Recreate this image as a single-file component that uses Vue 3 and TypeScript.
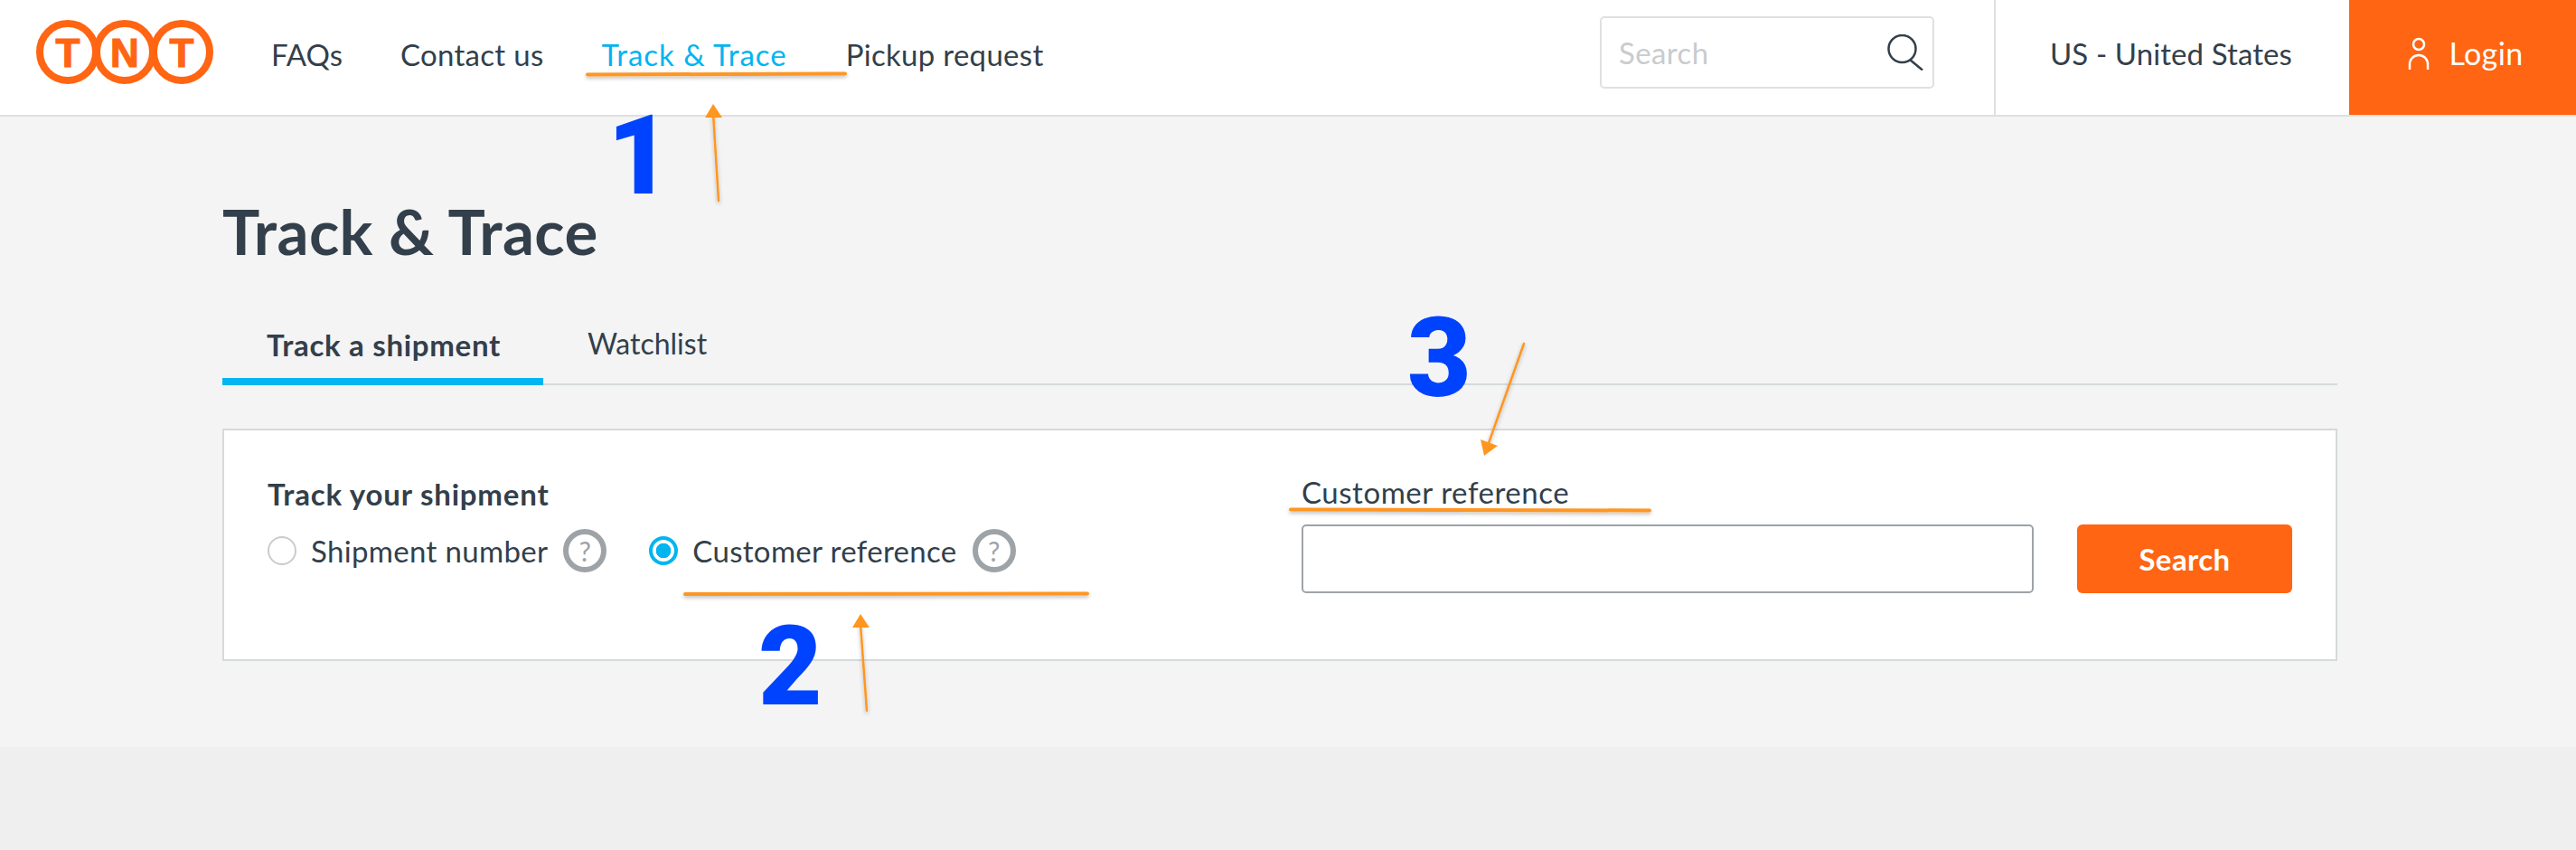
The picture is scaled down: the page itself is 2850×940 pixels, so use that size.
<script setup lang="ts">
const navItems: { label: string; active?: boolean }[] = [
  { label: 'FAQs' },
  { label: 'Contact us' },
  { label: 'Track & Trace', active: true },
  { label: 'Pickup request' },
]
</script>

<template>
  <div class="page">
    <header class="topbar">
      <svg class="logo" viewBox="0 0 196 71" width="196" height="71" aria-label="TNT">
        <g fill="none" stroke="#ff6512" stroke-width="8">
          <ellipse cx="35" cy="35.5" rx="31" ry="31.5" />
          <ellipse cx="98" cy="35.5" rx="31" ry="31.5" />
          <ellipse cx="161" cy="35.5" rx="31" ry="31.5" />
        </g>
        <g class="logo-letters" fill="#ff6512" stroke="#ff6512" stroke-width="1.2" text-anchor="middle">
          <text x="35" y="52">T</text>
          <text x="98" y="52">N</text>
          <text x="161" y="52">T</text>
        </g>
      </svg>
      <nav class="nav">
        <a v-for="item in navItems" :key="item.label" class="nav-link" :class="{ active: item.active }">{{ item.label }}</a>
      </nav>
      <div class="top-search">
        <span class="placeholder">Search</span>
        <svg width="40" height="40" viewBox="0 0 40 40" fill="none" stroke="#333f4a" stroke-width="2.5">
          <circle cx="16.5" cy="16" r="15" />
          <path d="M25 28 L39 39.5" />
        </svg>
      </div>
      <div class="locale">US - United States</div>
      <button class="login">
        <svg width="24" height="36" viewBox="0 0 24 36" fill="none" stroke="#fff" stroke-width="2.5">
          <circle cx="12" cy="8" r="6" />
          <path d="M2 36 V30 A10 10 0 0 1 22 30 V36" />
        </svg>
        <span>Login</span>
      </button>
    </header>

    <main class="main">
      <h1 class="title">Track &amp; Trace</h1>
      <div class="tabs">
        <div class="tab active">Track a shipment</div>
        <div class="tab">Watchlist</div>
      </div>
      <section class="card">
        <div class="left">
          <div class="card-heading">Track your shipment</div>
          <div class="options">
            <span class="radio"></span>
            <span class="opt-label">Shipment number</span>
            <span class="help">?</span>
            <span class="radio checked"></span>
            <span class="opt-label">Customer reference</span>
            <span class="help">?</span>
          </div>
        </div>
        <div class="right">
          <label class="field-label">Customer reference</label>
          <div class="field-row">
            <div class="field"></div>
            <button class="search-btn">Search</button>
          </div>
        </div>
      </section>
    </main>
    <div class="footer-band"></div>

    <div class="num n1">1</div>
    <div class="num n2">2</div>
    <div class="num n3">3</div>
    <svg class="marks" width="2850" height="940" viewBox="0 0 2850 940" fill="none">
      <defs>
        <filter id="soft" x="-5%" y="-200%" width="110%" height="500%">
          <feDropShadow dx="0" dy="2" stdDeviation="2" flood-color="#000" flood-opacity=".28" />
        </filter>
      </defs>
      <g stroke="#ff9620" stroke-linecap="round" filter="url(#soft)">
        <path d="M650 82.5 L935 81.5" stroke-width="4" />
        <path d="M758 657 L1203 656.5" stroke-width="4" />
        <path d="M1428 563.5 L1825 564.5" stroke-width="4" />
        <path d="M795 222 L789 125" stroke-width="2.5" />
        <path d="M959 786 L952 690" stroke-width="2.5" />
        <path d="M1686 380 L1647 490" stroke-width="2.5" />
      </g>
      <g fill="#ff9620">
        <path d="M789 115 L799 130 L780 130 Z" />
        <path d="M952 679 L962 694 L943 694 Z" />
        <path d="M1642 504 L1638 486 L1657 493 Z" />
      </g>
    </svg>
  </div>
</template>

<style>
html, body { margin: 0; background: #efefef; }
</style>

<style scoped>
.page {
  position: relative;
  width: 2850px;
  height: 940px;
  overflow: hidden;
  font-family: Lato, "Open Sans", sans-serif;
  color: #333f4a;
  background: #efefef;
}
.topbar {
  display: flex;
  align-items: center;
  height: 127px;
  background: #fff;
  border-bottom: 2px solid #e0e0e0;
}
.logo { margin-left: 40px; margin-top: -12px; flex: none; }
.logo-letters { font: 700 44px "Liberation Sans", sans-serif; }
.nav { display: flex; margin-left: 64px; font-size: 33px; letter-spacing: 0.3px; margin-top: -8px; }
.nav-link { margin-right: 64px; white-space: nowrap; }
.nav-link:first-child { letter-spacing: 0; }
.nav-link.active { color: #00b5f0; letter-spacing: 0.95px; margin-right: 65px; }
.top-search {
  box-sizing: border-box;
  width: 370px;
  height: 80px;
  margin-left: auto;
  margin-top: -11px;
  display: flex;
  align-items: center;
  justify-content: space-between;
  padding: 0 10px 0 19px;
  border: 2px solid #e0e0e0;
  border-radius: 5px;
}
.placeholder { font-size: 33px; letter-spacing: 0.4px; color: #c8ccce; }
.locale {
  box-sizing: border-box;
  width: 393px;
  height: 127px;
  margin-left: 66px;
  border-left: 2px solid #e0e0e0;
  display: flex;
  align-items: center;
  justify-content: center;
  font-size: 33px;
  letter-spacing: 0.1px;
  padding: 0 3px 10px 0;
}
.login {
  width: 251px;
  height: 127px;
  flex: none;
  background: #ff6512;
  border: 0;
  color: #fff;
  font: 34px Lato, sans-serif;
  letter-spacing: 0.4px;
  display: flex;
  align-items: center;
  justify-content: center;
  gap: 21px;
  padding: 0 0 10px 7px;
}
.main {
  height: 697px;
  box-sizing: border-box;
  background: #f4f4f4;
  padding: 88px 264px 0 246px;
}
.title {
  margin: 0;
  font-size: 69px;
  font-weight: 700;
  letter-spacing: 0.4px;
  line-height: 78px;
}
.tabs {
  display: flex;
  height: 99px;
  margin-top: 32px;
  box-sizing: border-box;
  border-bottom: 2px solid #d5dada;
  align-items: flex-end;
  font-size: 33px;
}
.tab {
  box-sizing: border-box;
  height: 89px;
  padding-top: 23px;
  margin-bottom: -2px;
  margin-left: 49px;
  font-size: 32px;
}
.tab.active {
  width: 355px;
  margin-left: 0;
  padding-left: 49px;
  padding-top: 24px;
  font-size: 33px;
  letter-spacing: 0.7px;
  font-weight: 700;
  border-bottom: 8px solid #00b5f0;
}
.card {
  box-sizing: border-box;
  height: 257px;
  margin-top: 48px;
  background: #fff;
  border: 2px solid #d5dada;
  display: flex;
  padding: 48px 48px 0;
}
.left { width: 1144px; flex: none; }
.card-heading { font-size: 33px; font-weight: 700; letter-spacing: 0.8px; line-height: 40px; padding-top: 2px; }
.options { display: flex; align-items: center; margin-top: 19px; font-size: 33px; letter-spacing: 0.33px; }
.radio {
  box-sizing: border-box;
  width: 32px;
  height: 32px;
  flex: none;
  border-radius: 50%;
  border: 2px solid #c8ccce;
}
.radio.checked {
  border: 4px solid #00b5f0;
  background: radial-gradient(circle, #00b5f0 0 8px, #fff 8.6px);
  margin-left: 47px;
}
.opt-label { margin-left: 16px; white-space: nowrap; }
.help {
  box-sizing: border-box;
  width: 48px;
  height: 48px;
  flex: none;
  margin-left: 17px;
  border-radius: 50%;
  border: 6px solid #9ea3a7;
  color: #9ea3a7;
  font-size: 30px;
  letter-spacing: 0;
  display: flex;
  align-items: center;
  justify-content: center;
}
.right { flex: 1; }
.field-label { display: block; font-size: 33px; letter-spacing: 0.55px; line-height: 40px; }
.field-row { display: flex; gap: 48px; margin-top: 16px; }
.field {
  box-sizing: border-box;
  width: 810px;
  height: 76px;
  border: 2px solid #9ea3a7;
  border-radius: 5px;
  background: #fff;
}
.search-btn {
  width: 238px;
  height: 76px;
  border: 0;
  border-radius: 6px;
  background: #ff6512;
  color: #fff;
  font: 700 33px Lato, sans-serif;
  letter-spacing: 0.4px;
}
.footer-band { height: 114px; background: #efefef; }
.num {
  position: absolute;
  font: 900 122px/1 Roboto, sans-serif;
  color: #0043ff;
}
.n1 { left: 672px; top: 112px; }
.n2 { left: 839px; top: 677px; }
.n3 { left: 1557px; top: 336px; }
.marks { position: absolute; left: 0; top: 0; pointer-events: none; }
</style>
